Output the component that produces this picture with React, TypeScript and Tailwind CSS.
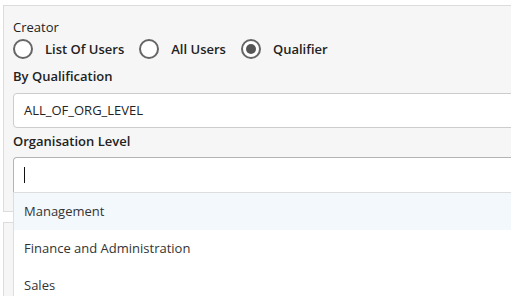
import { useState } from "react";

type CreatorMode = "list" | "all" | "qualifier";

const ORG_LEVELS = ["Management", "Finance and Administration", "Sales"];

function Radio({
  label,
  checked,
  onSelect,
}: {
  label: string;
  checked: boolean;
  onSelect: () => void;
}) {
  return (
    <label className="flex cursor-pointer items-center" onClick={onSelect}>
      <span className="flex h-[20px] w-[20px] items-center justify-center rounded-full border-2 border-[#666666] bg-white">
        {checked ? <span className="h-[10px] w-[10px] rounded-full bg-[#555555]" /> : null}
      </span>
      <span className="ml-[12px] font-semibold text-[#222222]">{label}</span>
    </label>
  );
}

export default function App() {
  const [mode, setMode] = useState<CreatorMode>("qualifier");
  const [hovered, setHovered] = useState(0);

  return (
    <div
      className="h-[296px] w-[511px] overflow-hidden bg-white text-[13px] text-[#222222]"
      style={{ fontFamily: '"Open Sans", "Noto Sans", sans-serif' }}
    >
      <div className="relative w-[620px] pl-[3px] pt-[5px]">
        <section className="h-[207px] border-l border-t border-b border-[#dcdcdc] bg-[#f6f6f6] pl-[9px] pt-[12px]">
          <div className="leading-[18px]">Creator</div>
          <div className="mt-[3px] flex items-center gap-[15px] leading-[20px]">
            <Radio label="List Of Users" checked={mode === "list"} onSelect={() => setMode("list")} />
            <Radio label="All Users" checked={mode === "all"} onSelect={() => setMode("all")} />
            <Radio label="Qualifier" checked={mode === "qualifier"} onSelect={() => setMode("qualifier")} />
          </div>
          <div className="mt-[8px] font-semibold leading-[18px]">By Qualification</div>
          <div className="mt-[8px] flex h-[35px] items-center rounded-[4px] border border-[#cccccc] bg-white pl-[10px]">
            ALL_OF_ORG_LEVEL
          </div>
          <div className="mt-[4px] font-semibold leading-[18px]">Organisation Level</div>
          <div className="relative mt-[7px]">
            <div className="flex h-[35px] items-center rounded-t-[4px] border border-b-0 border-[#b4b4b4] bg-white pl-[10px]">
              <span className="h-[16px] w-px bg-[#111111]" />
            </div>
            <ul className="absolute left-0 right-0 top-[35px] z-10 border border-[#dddddd] bg-white">
              {ORG_LEVELS.map((level, i) => (
                <li
                  key={level}
                  onMouseEnter={() => setHovered(i)}
                  className={`flex h-[37px] items-center pl-[10px] text-[#333333] ${
                    hovered === i ? "bg-[#f3f8fd]" : "bg-white"
                  }`}
                >
                  {level}
                </li>
              ))}
            </ul>
          </div>
        </section>
        <section className="mt-[10px] h-[120px] border-l border-t border-[#dcdcdc] bg-[#f6f6f6]" />
      </div>
    </div>
  );
}
